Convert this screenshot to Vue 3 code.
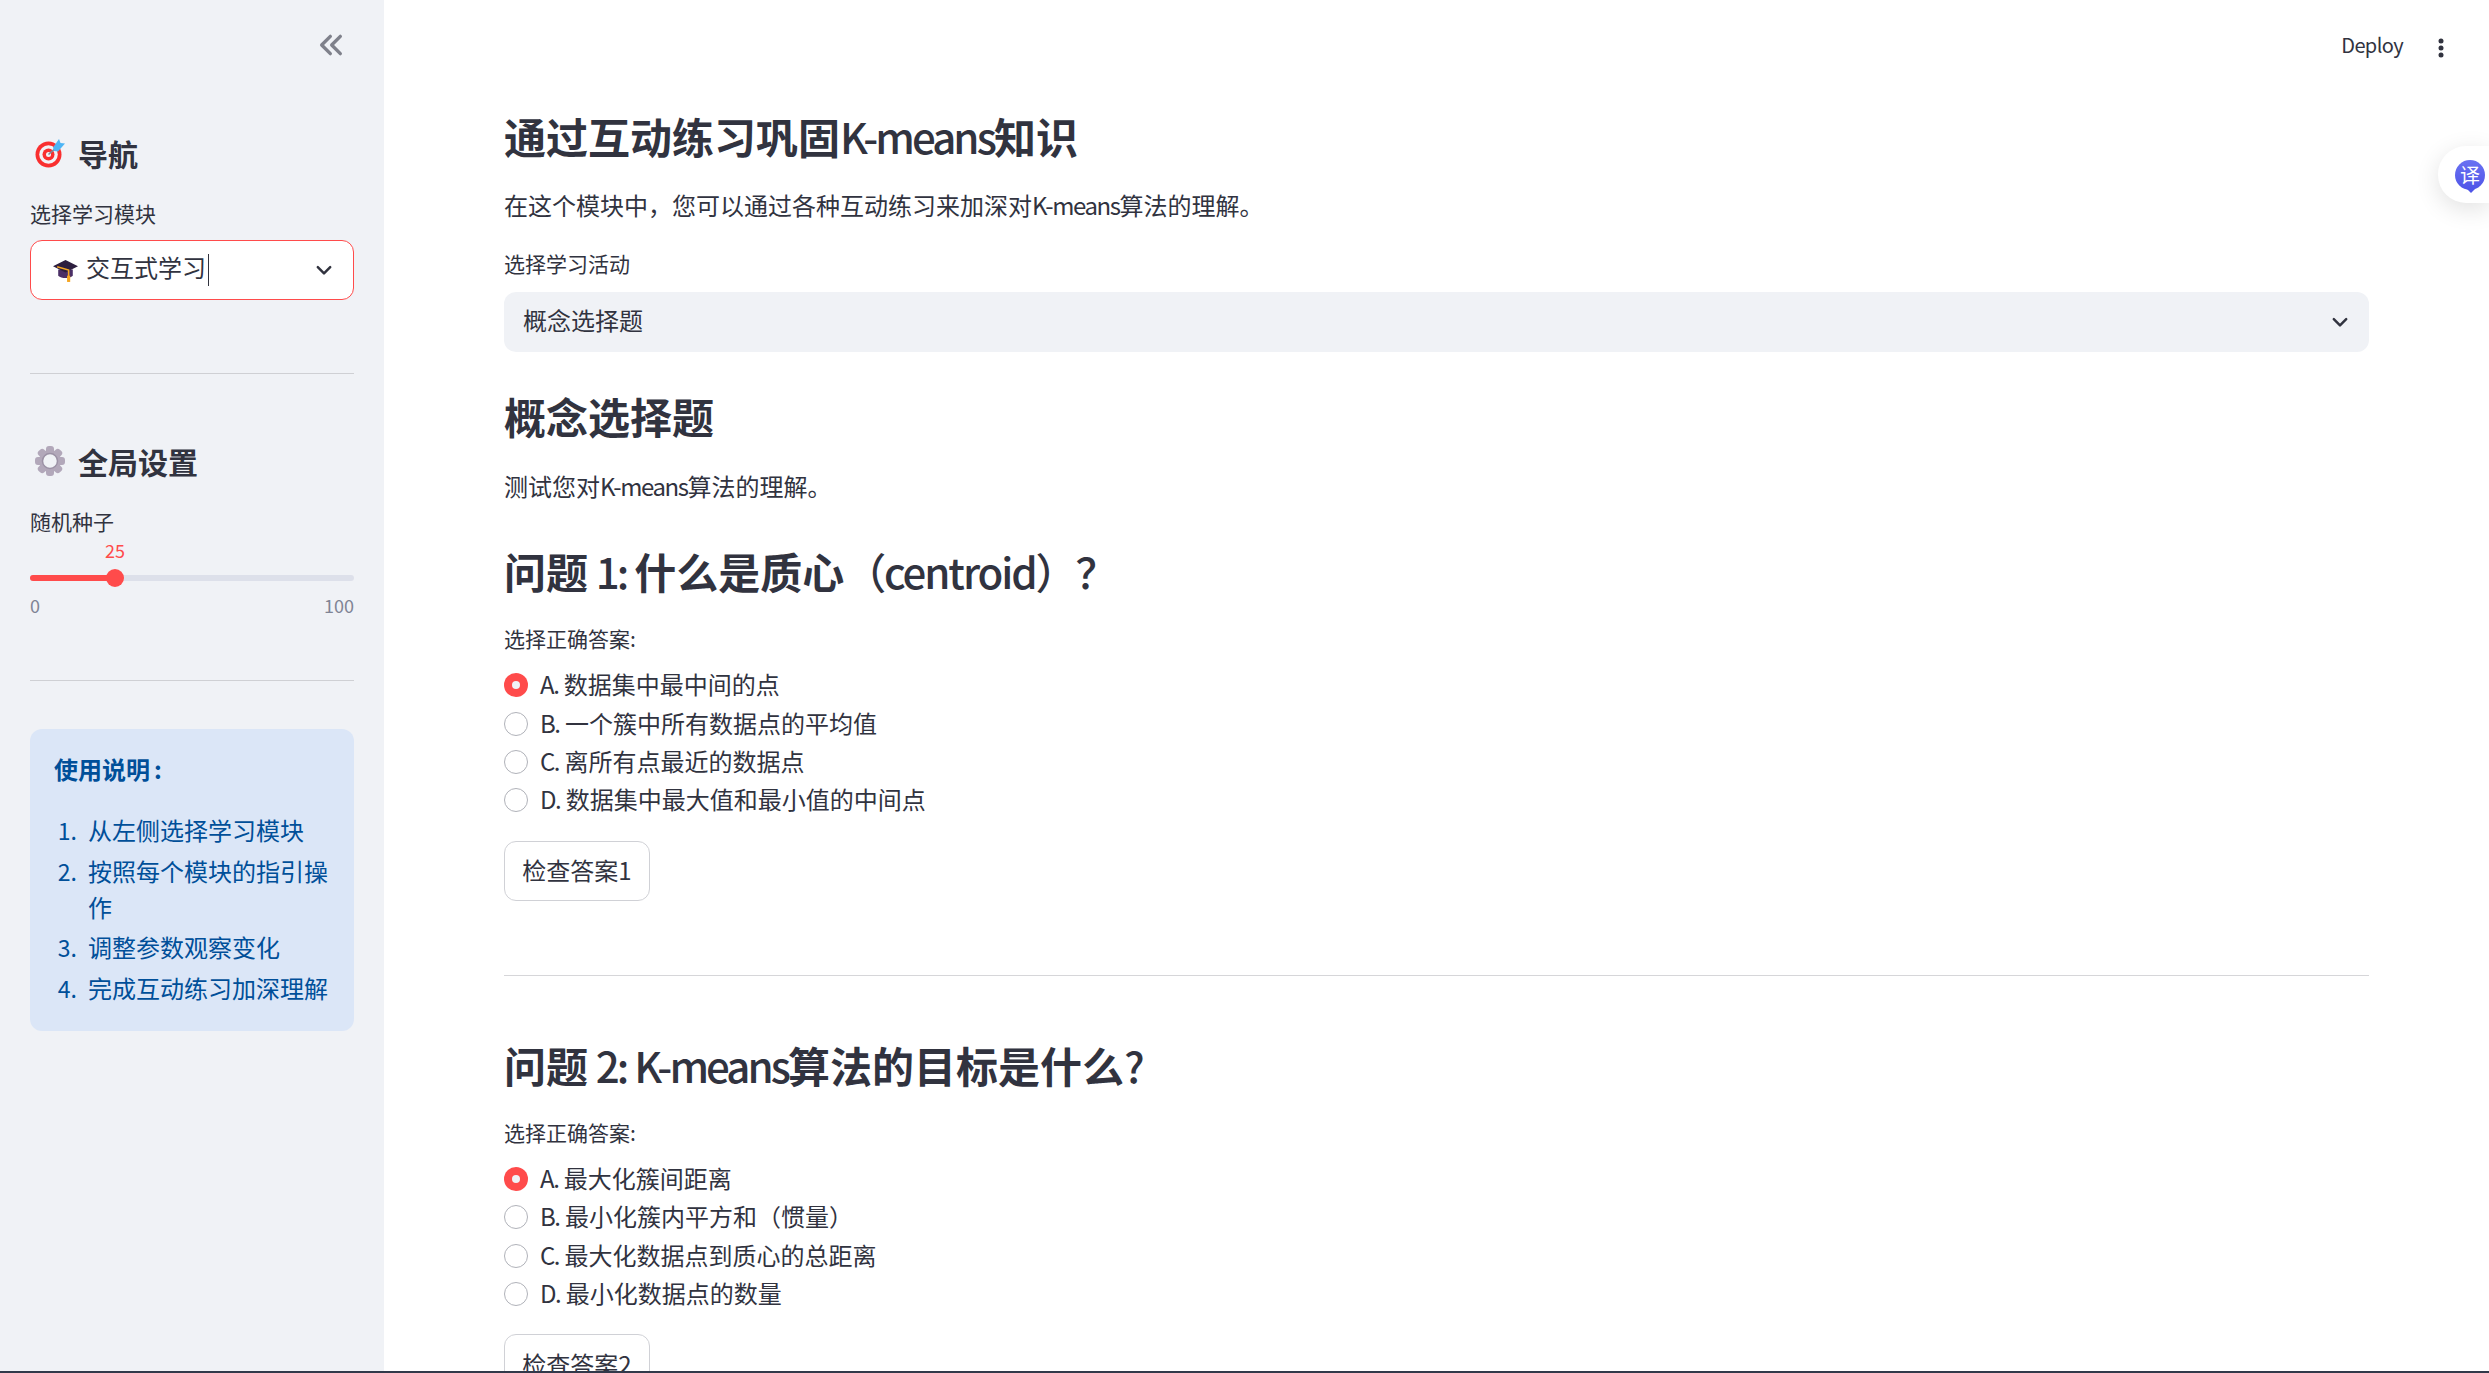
<script setup>
const steps = [
  { n: '1.', t: '从左侧选择学习模块' },
  { n: '2.', t: '按照每个模块的指引操作' },
  { n: '3.', t: '调整参数观察变化' },
  { n: '4.', t: '完成互动练习加深理解' }
]
const questions = [
  {
    title: [
      { t: '问题', b: true }, { t: ' 1: ' }, { t: '什么是质心', b: true }, { t: '（centroid）？', loose: true }
    ],
    button: '检查答案1',
    options: [
      ['A.', '数据集中最中间的点'],
      ['B.', '一个簇中所有数据点的平均值'],
      ['C.', '离所有点最近的数据点'],
      ['D.', '数据集中最大值和最小值的中间点']
    ]
  },
  {
    title: [
      { t: '问题', b: true }, { t: ' 2: K-means' }, { t: '算法的目标是什么', b: true }, { t: '?' }
    ],
    button: '检查答案2',
    options: [
      ['A.', '最大化簇间距离'],
      ['B.', '最小化簇内平方和（惯量）'],
      ['C.', '最大化数据点到质心的总距离'],
      ['D.', '最小化数据点的数量']
    ]
  }
]
</script>

<template>
  <div class="app">
    <aside class="sidebar">
      <div class="collapse-row">
        <svg class="collapse" viewBox="0 0 24 24" width="32" height="32" fill="none" stroke="#7f818b" stroke-width="2.500" stroke-linecap="round" stroke-linejoin="round">
          <path d="M11.500 5.500 5 12l6.500 6.500" /><path d="M19 5.500 12.500 12l6.500 6.500" />
        </svg>
      </div>

      <h2 class="side-h first">
        <svg class="emoji" viewBox="0 0 32 32" width="32" height="32">
          <circle cx="14.500" cy="17.500" r="13" fill="#f92f2f" />
          <circle cx="14.500" cy="17.500" r="9.300" fill="#f2f2f6" />
          <circle cx="14.500" cy="17.500" r="6" fill="#f92f2f" />
          <circle cx="14.500" cy="17.500" r="2.500" fill="#f2f2f6" />
          <path d="M14.500 17.500 24 9" stroke="#7b8b99" stroke-width="1.600" />
          <path d="M19 10.500 25 2l1.500 4L31 6.500 24 14.500l-4-.5z" fill="#4db5f5" />
        </svg>
        <span>导航</span>
      </h2>
      <label class="side-label">选择学习模块</label>
      <div class="side-select">
        <svg viewBox="0 0 24 22" width="25" height="23" class="cap">
          <path d="M5 10v6c3 3 11 3 14 0v-6z" fill="#4a2f66" />
          <path d="M0 7 12 1l12 6-12 6z" fill="#2d1e3e" />
          <path d="M4 7.500 15 10.500V17" stroke="#f5a623" stroke-width="1.500" fill="none" />
          <rect x="13.500" y="16" width="3" height="6" fill="#f5a623" />
        </svg>
        <span class="sel-text">交互式学习</span>
        <span class="caret"></span>
        <svg class="chev" viewBox="0 0 16 16" width="18" height="18" fill="none" stroke="#31333f" stroke-width="2.200" stroke-linecap="round" stroke-linejoin="round"><path d="m2.500 5.500 5.500 5.500 5.500-5.500" /></svg>
      </div>

      <hr class="side-hr one" />

      <h2 class="side-h second">
        <svg class="emoji" viewBox="0 0 32 32" width="32" height="32">
          <g fill="#b2a8ba">
            <circle cx="16" cy="16" r="11" />
            <rect v-for="a in [0,45,90,135]" :key="a" x="12" y="1" width="8" height="30" rx="3" :transform="`rotate(${a} 16 16)`" />
          </g>
          <circle cx="16" cy="16" r="7.500" fill="#f0f2f6" />
          <circle cx="16" cy="16" r="7.500" fill="none" stroke="#9b91a5" stroke-width="1.500" />
        </svg>
        <span>全局设置</span>
      </h2>
      <label class="side-label seed">随机种子</label>
      <div class="slider">
        <div class="slider-value">25</div>
        <div class="track"><div class="fill"></div><div class="thumb"></div></div>
        <div class="ticks"><span>0</span><span>100</span></div>
      </div>

      <hr class="side-hr two" />

      <div class="info">
        <p class="info-title">使用说明<span class="colon">:</span></p>
        <ol class="info-list">
          <li v-for="s in steps" :key="s.n"><span class="num">{{ s.n }}</span><span class="step">{{ s.t }}</span></li>
        </ol>
      </div>
    </aside>

    <main class="main">
      <header class="toolbar">
        <span class="deploy">Deploy</span>
        <svg viewBox="0 0 8 24" width="8" height="24" fill="#31333f"><circle cx="4" cy="5" r="2.500" /><circle cx="4" cy="12" r="2.500" /><circle cx="4" cy="19" r="2.500" /></svg>
      </header>
      <div class="content">
        <h1 class="title"><b>通过互动练习巩固</b><span class="lat">K-means</span><b>知识</b></h1>
        <p class="para">在这个模块中，您可以通过各种互动练习来加深对<span class="lat">K-means</span>算法的理解。</p>
        <label class="field-label">选择学习活动</label>
        <div class="main-select">
          <span class="up">概念选择题</span>
          <svg viewBox="0 0 16 16" width="18" height="18" fill="none" stroke="#31333f" stroke-width="2.200" stroke-linecap="round" stroke-linejoin="round"><path d="m2.500 5.500 5.500 5.500 5.500-5.500" /></svg>
        </div>
        <h2 class="title sub"><b>概念选择题</b></h2>
        <p class="para test">测试您对<span class="lat">K-means</span>算法的理解。</p>

        <section v-for="(q, i) in questions" :key="q.button" class="question" :class="{ second: i === 1 }">
          <h3 class="title">
            <template v-for="p in q.title" :key="p.t">
              <b v-if="p.b">{{ p.t }}</b>
              <span v-else class="lat" :class="{ loose: p.loose }">{{ p.t }}</span>
            </template>
          </h3>
          <div class="field-label answer">选择正确答案:</div>
          <div class="radios">
            <div v-for="(o, j) in q.options" :key="o[0]" class="radio">
              <span class="dot" :class="{ on: j === 0 }"></span>
              <span class="opt"><span class="lat">{{ o[0] }}</span> {{ o[1] }}</span>
            </div>
          </div>
          <button class="check">{{ q.button }}</button>
          <hr v-if="i === 0" class="main-hr" />
        </section>
      </div>
    </main>

    <div class="translate">
      <span class="tr-icon">译</span>
    </div>
    <div class="bottom-line"></div>
  </div>
</template>

<style>
html, body { margin: 0; padding: 0; overflow: hidden; background: #fff; }
</style>

<style scoped>
* { box-sizing: border-box; }
.app {
  display: flex;
  width: 2489px;
  height: 1373px;
  overflow: hidden;
  position: relative;
  font-family: "Noto Sans CJK SC", "Noto Sans", sans-serif;
  color: #31333f;
  background: #fff;
}
.sidebar {
  width: 384px;
  flex: none;
  background: #f0f2f6;
  padding: 0 30px;
  display: flex;
  flex-direction: column;
}
.collapse-row { display: flex; justify-content: flex-end; padding-top: 29px; height: 80px; }
.collapse { margin-right: 7px; }
.side-h {
  margin: 0;
  display: flex;
  align-items: center;
  gap: 12px;
  font-size: 30px;
  line-height: 40px;
  font-weight: 700;
  padding-left: 4px;
}
.side-h.first { margin-top: 53px; }
.side-h.second { margin-top: 67px; }
.emoji { flex: none; }
.side-label { display: block; font-size: 21px; line-height: 28px; }
.side-h.first + .side-label { margin-top: 26px; }
.side-label.seed { margin-top: 26px; }
.side-select {
  margin-top: 13px;
  height: 60px;
  background: #fff;
  border: 1px solid #ff4b4b;
  border-radius: 12px;
  display: flex;
  align-items: center;
  padding: 0 20px 0 22px;
  font-size: 24px;
}
.cap { flex: none; margin-right: 8px; }
.sel-text { line-height: 32px; padding-bottom: 7px; }
.caret { width: 1px; height: 32px; background: #31333f; margin-left: 2px; }
.chev { margin-left: auto; }
.side-hr { border: 0; border-top: 1.500px solid #cfd0d4; margin: 0; }
.side-hr.one { margin-top: 73px; }
.side-hr.two { margin-top: 63px; }
.slider { margin-top: 3px; }
.slider-value { color: #ff4b4b; font-size: 18px; line-height: 24px; margin-left: 75px; width: 20px; text-align: center; }
.track { position: relative; height: 6px; margin-top: 13px; background: #dde0ea; border-radius: 3px; }
.fill { width: 85px; height: 100%; background: #ff4b4b; border-radius: 3px; }
.thumb { position: absolute; left: 76px; top: -6px; width: 18px; height: 18px; border-radius: 50%; background: #ff4b4b; }
.ticks { display: flex; justify-content: space-between; margin-top: 12px; color: #808495; font-size: 18px; line-height: 24px; }
.info {
  margin-top: 48px;
  height: 302px;
  padding: 25px 24px 0;
  background: #dbe6f7;
  border-radius: 12px;
  color: #004f99;
  font-size: 24px;
}
.info-title { margin: 0; font-weight: 700; line-height: 30px; }
.colon { margin-left: 4px; }
.info-list { list-style: none; margin: 28px 0 0; padding: 0; }
.info-list li { display: flex; line-height: 36px; margin-bottom: 4.500px; }
.num { flex: none; width: 35px; text-align: right; padding-right: 11px; margin-left: -1px; font-size: 23px; }
.step { flex: 1; }
.main { flex: 1; min-width: 0; position: relative; }
.toolbar {
  position: absolute;
  top: 33px;
  right: 44px;
  display: flex;
  align-items: center;
  gap: 34px;
  font-size: 20px;
  line-height: 24px;
}
.deploy { letter-spacing: -0.6px; padding-bottom: 5px; }
.content { padding: 110px 120px 0; width: 2105px; }
.title { margin: 0; font-size: 42px; line-height: 52px; font-weight: 500; word-spacing: 0.03em; }
.title b { font-weight: 700; }
.lat { letter-spacing: -0.06em; }
.title .lat { letter-spacing: -0.07em; }
.title .lat.loose { letter-spacing: -0.05em; }
.para { margin: 0; font-size: 24px; line-height: 36px; }
.title + .para { margin-top: 25px; }
.field-label { display: block; font-size: 21px; line-height: 28px; margin-top: 26px; }
.main-select {
  margin-top: 15px;
  height: 60px;
  border-radius: 12px;
  background: #f0f2f6;
  display: flex;
  align-items: center;
  justify-content: space-between;
  padding: 0 20px 0 19px;
  font-size: 24px;
}
.up { padding-bottom: 6px; }
.sub { margin-top: 38px; }
.para.test { margin-top: 26px; }
.question { margin-top: 41px; }
.question.second { margin-top: 63px; }
.field-label.answer { margin-top: 27px; }
.radios { margin-top: 14px; display: flex; flex-direction: column; }
.radio { display: flex; align-items: center; gap: 12px; font-size: 24px; height: 38.400px; }
.opt { padding-bottom: 3px; }
.dot { width: 24px; height: 24px; border-radius: 50%; border: 1.500px solid #b0b2b9; background: #fff; flex: none; position: relative; }
.dot.on { background: #ff4b4b; border: 0; }
.dot.on::after { content: ""; position: absolute; inset: 8px; border-radius: 50%; background: #f0f2f6; }
.check {
  display: block;
  margin-top: 21px;
  width: 146px;
  height: 60px;
  background: #fff;
  border: 1px solid #d0d1d6;
  border-radius: 12px;
  font: inherit;
  font-size: 24px;
  color: #31333f;
  padding: 0 0 2px;
}
.main-hr { border: 0; border-top: 1.500px solid #d6d6d9; margin: 74px 0 0; }
.translate {
  position: absolute;
  top: 146px;
  right: 0;
  width: 51px;
  height: 57px;
  background: #fff;
  border-radius: 28px 0 0 28px;
  box-shadow: 0 6px 24px rgba(0, 0, 0, 0.12);
  display: flex;
  align-items: center;
  padding-left: 17px;
}
.tr-icon {
  flex: none;
  position: relative;
  width: 30px;
  height: 30px;
  border-radius: 50%;
  background: linear-gradient(180deg, #6a72f2, #4f55e8);
  color: #fff;
  font-size: 20px;
  line-height: 29px;
  text-align: center;
}
.tr-icon::after {
  content: "";
  position: absolute;
  left: 12px;
  bottom: -3px;
  border: 4px solid transparent;
  border-top-color: #4f55e8;
  border-bottom-width: 0;
}
.bottom-line { position: absolute; left: 0; right: 0; bottom: 0; height: 2px; background: #31394a; }
</style>
